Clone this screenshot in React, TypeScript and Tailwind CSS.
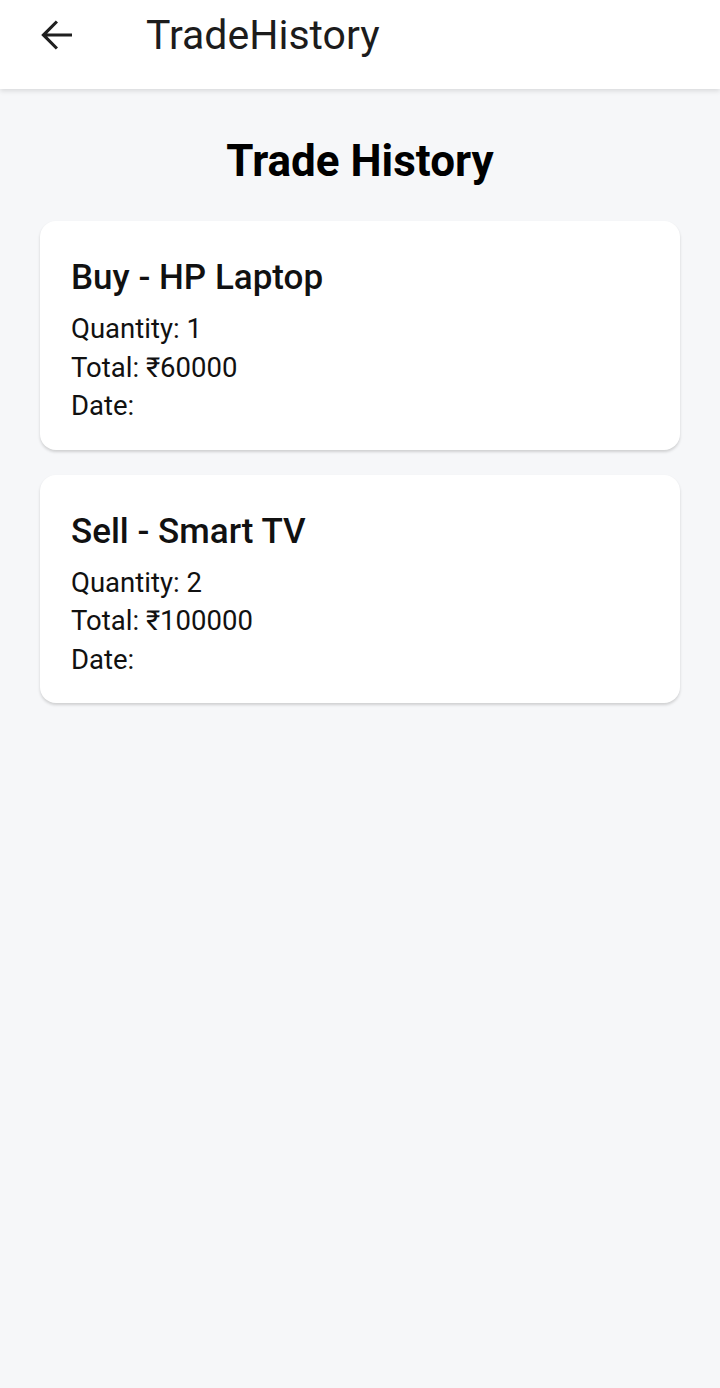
import React from "react";

type Trade = {
  type: string;
  product: string;
  quantity: number;
  total: number;
};

const trades: Trade[] = [
  { type: "Buy", product: "HP Laptop", quantity: 1, total: 60000 },
  { type: "Sell", product: "Smart TV", quantity: 2, total: 100000 },
];

const BackArrow = () => (
  <svg width="48" height="48" viewBox="0 0 24 24" fill="#1f1f1f">
    <path d="M20 11.2H7.6l5.4-5.4L11.9 4.7 4.6 12l7.3 7.3 1.1-1.1-5.4-5.4H20v-1.6z" />
  </svg>
);

const TradeCard: React.FC<{ trade: Trade }> = ({ trade }) => {
  return (
    <div className="bg-white rounded-[16px] px-[31px] pt-[36px] pb-[24px] shadow-[0_2px_3px_rgba(0,0,0,0.16)]">
      <p className="text-[35px] leading-[42px] font-medium text-[#111]">
        {trade.type} - {trade.product}
      </p>
      <div className="mt-[11px] text-[27.5px] leading-[38.5px] text-[#111]">
        <p>Quantity: {trade.quantity}</p>
        <p>Total: ₹{trade.total}</p>
        <p>Date:</p>
      </div>
    </div>
  );
};

export default function App() {
  return (
    <div
      className="min-h-[1388px] w-full bg-[#f6f7f9]"
      style={{ fontFamily: "Roboto, 'Noto Sans', sans-serif" }}
    >
      {/* top bar */}
      <div className="h-[89px] bg-white flex items-center pb-[20px] pl-[32px] shadow-[0_2px_5px_rgba(0,0,0,0.12)] relative">
        <BackArrow />
        <p className="ml-[66px] text-[41px] leading-[48px] text-[#1c1c1c]">TradeHistory</p>
      </div>

      {/* content */}
      <div className="px-[40px]">
        <h1 className="text-center text-[44px] font-bold text-black mt-[46px] leading-[52px]">
          Trade History
        </h1>
        <div className="mt-[34px] flex flex-col gap-[25px]">
          {trades.map((t) => (
            <TradeCard key={t.product} trade={t} />
          ))}
        </div>
      </div>
    </div>
  );
}
